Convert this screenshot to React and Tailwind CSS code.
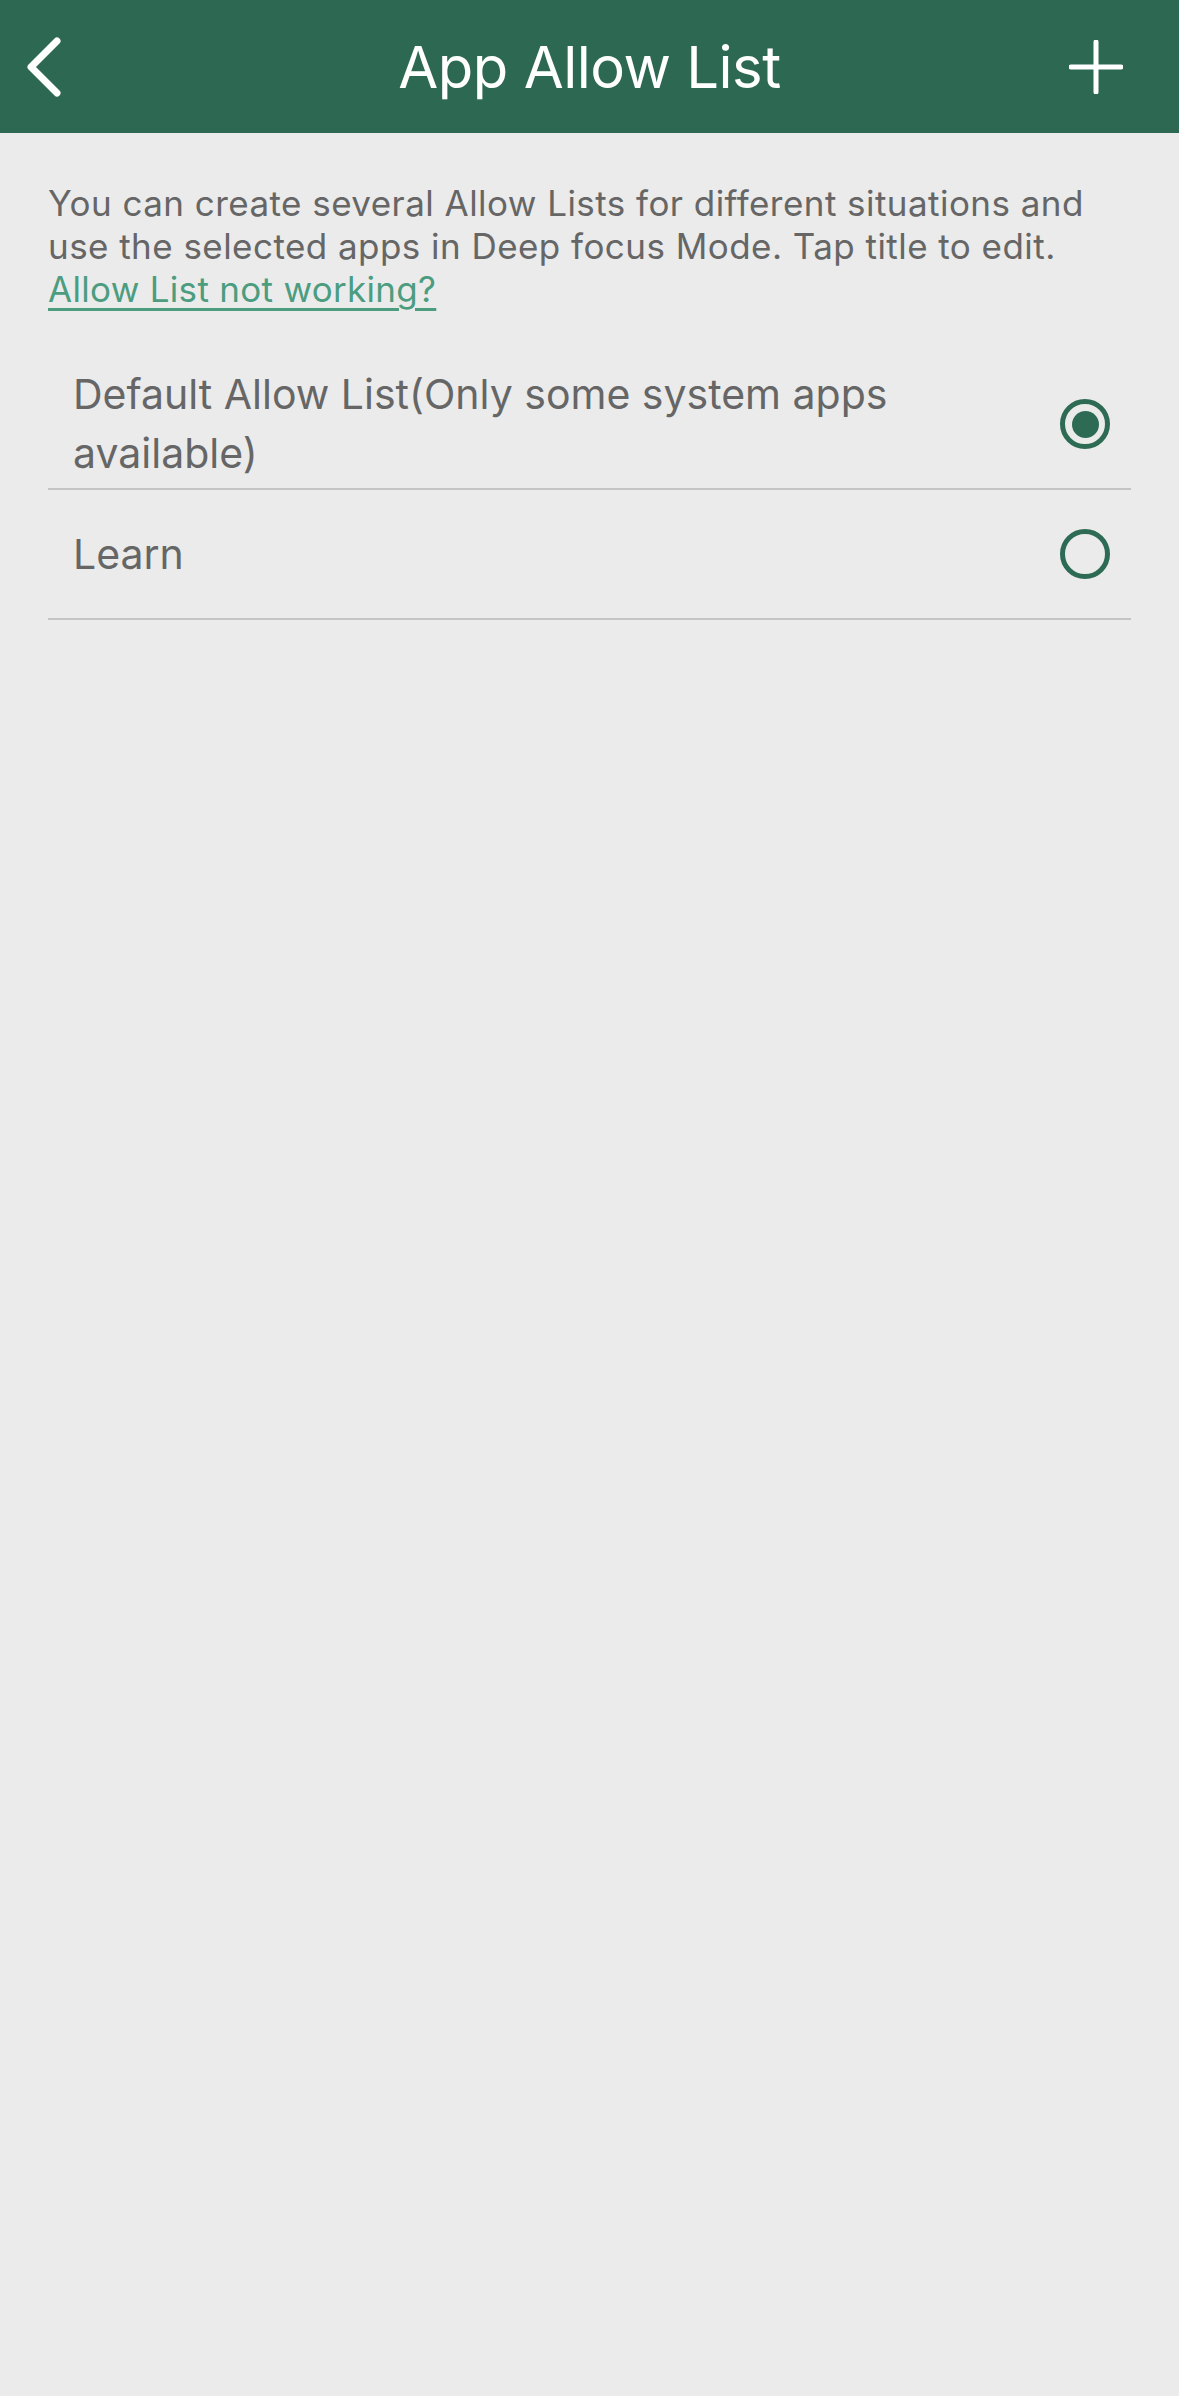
export default function App() {
  const lists = [
    { id: 1, name: 'Default Allow List(Only some system apps available)', selected: true },
    { id: 2, name: 'Learn', selected: false },
  ]

  return (
    <div className="min-h-[2396px] w-full bg-[#ebebeb] font-['Inter','Noto_Sans',sans-serif]">
      {/* header */}
      <div className="h-[133px] bg-[#2d6952] grid grid-cols-[1fr_auto_1fr] items-center px-[26px] text-white">
        <button className="w-[60px] h-[60px] flex items-center justify-self-start">
          <svg width="40" height="62" viewBox="0 0 40 62" fill="none">
            <path d="M31 5 L5 31 L31 57" stroke="white" strokeWidth="7" strokeLinecap="round" strokeLinejoin="round" />
          </svg>
        </button>
        <h1 className="text-[58px] leading-none tracking-[-0.5px]">App Allow List</h1>
        <button className="h-[60px] flex items-center justify-self-end pr-[30px]">
          <svg width="54" height="54" viewBox="0 0 54 54" fill="none">
            <path d="M27 2 V52 M2 27 H52" stroke="white" strokeWidth="5" strokeLinecap="round" />
          </svg>
        </button>
      </div>

      <div className="px-[48px]">
        <p className="pt-[49px] text-[35px] leading-[43px] text-[#666666] tracking-[0.45px]">
          You can create several Allow Lists for different situations and use the selected apps in Deep focus Mode. Tap title to edit.
          <br />
          <span className="text-[#4c9d80] underline decoration-[3px] underline-offset-[6px] tracking-[0.3px]">Allow List not working?</span>
        </p>

        <div className="mt-[49px]">
          {lists.map(l => (
            <div key={l.id} className="min-h-[130px] flex items-center border-b-2 border-[#c4c4c4]">
              <span className="flex-1 pl-[25px] pr-[60px] text-[41px] leading-[59px] text-[#666666]">{l.name}</span>
              <div className="w-[50px] h-[50px] mr-[21px] rounded-full border-[5px] border-[#2d6b55] flex items-center justify-center">
                {l.selected && <div className="w-[27px] h-[27px] rounded-full bg-[#2d6b55]" />}
              </div>
            </div>
          ))}
        </div>
      </div>
    </div>
  )
}
